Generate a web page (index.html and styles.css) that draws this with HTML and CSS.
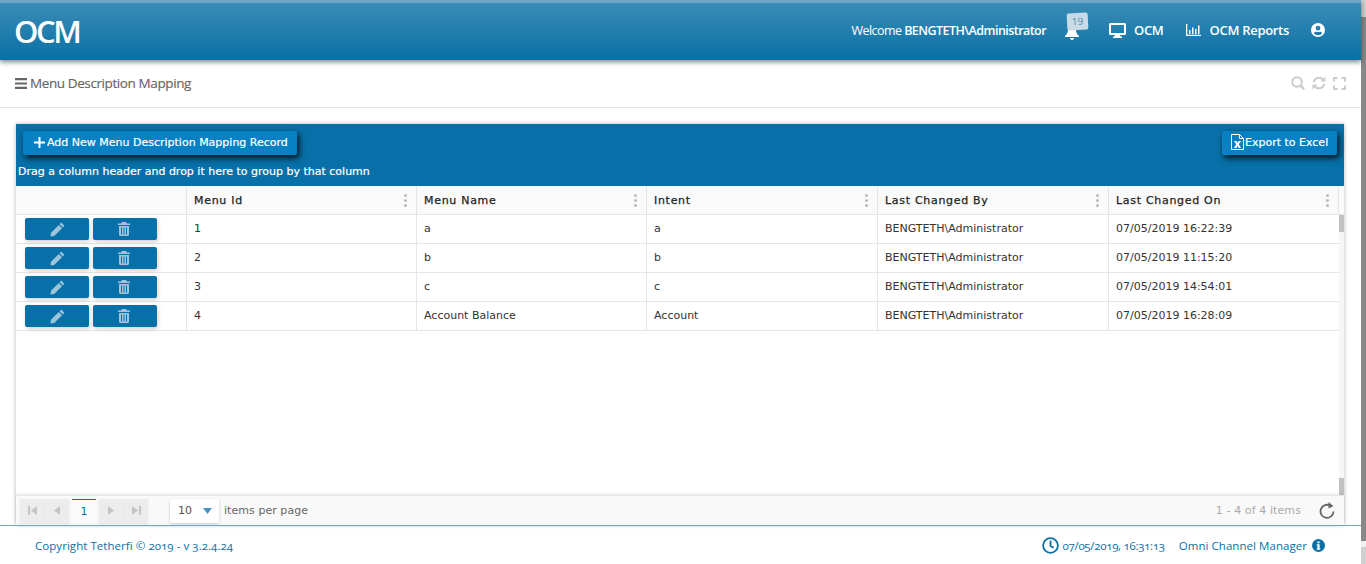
FILE: index.html
```html
<!DOCTYPE html>
<html lang="en">
<head>
<meta charset="utf-8">
<title>Menu Description Mapping</title>
<link rel="stylesheet" href="styles.css">
</head>
<body>
<div class="page">
  <div class="main">
    <header class="topbar">
      <div class="logo">OCM</div>
      <nav class="topnav">
        <span class="welcome">Welcome <b>BENGTETH\Administrator</b></span>
        <span class="bell">
          <svg width="14" height="16" viewBox="0 0 14 16"><path fill="#fff" d="M7 0c2.600 0 3.800 2 3.800 4.500 0 3.500.9 5.500 3.200 7.500v1H0v-1c2.300-2 3.200-4 3.200-7.500C3.200 2 4.400 0 7 0zM5 14h4c0 1-1 2-2 2s-2-1-2-2z"/></svg>
          <span class="badge">19</span>
        </span>
        <span class="navitem monitor">
          <svg width="17" height="15" viewBox="0 0 17 15"><path fill="#fff" fill-rule="evenodd" d="M1.500 0h14A1.500 1.500 0 0 1 17 1.500v9a1.500 1.500 0 0 1-1.500 1.500H11l.5 1.500H13V15H4v-1.500h1.500L6 12H1.500A1.500 1.500 0 0 1 0 10.500v-9A1.500 1.500 0 0 1 1.500 0zM2 2v8h13V2z"/></svg>
          OCM</span>
        <span class="navitem reports">
          <svg width="15" height="12" viewBox="0 0 15 12"><path fill="#fff" d="M0 0h1.300v10.700H15V12H0zM3 6h1.500v4H3zM6 3.500h1.500V10H6zM9 5h1.500v5H9zM12 1.500h1.500V10H12z"/></svg>
          OCM Reports</span>
        <svg class="user" width="14" height="14" viewBox="0 0 14 14"><path fill="#fff" fill-rule="evenodd" d="M7 0a7 7 0 1 1 0 14A7 7 0 0 1 7 0zm0 2.800a2.400 2.400 0 1 0 0 4.800 2.400 2.400 0 0 0 0-4.800zM7 12.200c1.700 0 3.200-.8 4.200-2-.4-1-1.300-1.500-2.400-1.500-.6.200-1.200.3-1.800.3s-1.200-.1-1.800-.3c-1.100 0-2 .5-2.400 1.500 1 1.200 2.500 2 4.200 2z"/></svg>
      </nav>
    </header>

    <div class="titlebar">
      <h1 class="pagetitle">
        <svg width="12" height="11" viewBox="0 0 12 11"><path fill="#666" d="M0 0h12v2.200H0zM0 4.400h12v2.200H0zM0 8.800h12V11H0z"/></svg>
        Menu Description Mapping</h1>
      <div class="tools">
        <svg width="14" height="14" viewBox="0 0 14 14"><path fill="none" stroke="#ccc" stroke-width="2" d="M6 1.200a4.800 4.800 0 1 0 0 9.600 4.800 4.800 0 0 0 0-9.600z"/><path stroke="#ccc" stroke-width="2.600" d="M9.500 9.500l3.600 3.600"/></svg>
        <svg width="14" height="14" viewBox="0 0 14 14"><path fill="none" stroke="#ccc" stroke-width="2" d="M1.800 6A5.300 5.300 0 0 1 11 3.500M12.200 8A5.300 5.300 0 0 1 3 10.500"/><path fill="#ccc" d="M13.500.5v5h-5zM.5 13.500v-5h5z"/></svg>
        <svg width="13" height="13" viewBox="0 0 13 13"><path fill="none" stroke="#ccc" stroke-width="2" d="M1 4.500V1h3.500M8.500 1H12v3.500M12 8.500V12H8.500M4.500 12H1V8.500"/></svg>
      </div>
    </div>

    <section class="gridwrap">
      <div class="grid">
        <div class="toolbar">
          <div class="toolbar-row">
            <button class="tbtn add" type="button"><svg width="11" height="11" viewBox="0 0 11 11"><path fill="#fff" d="M4.500 0h2v4.500H11v2H6.500V11h-2V6.500H0v-2h4.500z"/></svg>Add New Menu Description Mapping Record</button>
            <button class="tbtn export" type="button">
              <svg width="13" height="16" viewBox="0 0 13 16"><path fill="none" stroke="#fff" d="M.5.500h8l4 4v11H.5zM8.500.500v4h4"/><path fill="#fff" d="M3 7h2.400l1.100 2 1.100-2H10L7.800 10.300 10 14H7.600l-1.100-2.200L5.400 14H3l2.200-3.700z"/></svg>Export to Excel</button>
          </div>
          <div class="grouphint">Drag a column header and drop it here to group by that column</div>
        </div>

        <div class="gridhead">
          <div class="hcell"></div>
          <div class="hcell">Menu Id<span class="kebab"></span></div>
          <div class="hcell">Menu Name<span class="kebab"></span></div>
          <div class="hcell">Intent<span class="kebab"></span></div>
          <div class="hcell">Last Changed By<span class="kebab"></span></div>
          <div class="hcell">Last Changed On<span class="kebab"></span></div>
        </div>

        <div class="gridbody">
          <div class="rows">
            <div class="row">
              <div class="cell actions"><button class="rowbtn" type="button" aria-label="Edit"><svg class="i-edit" width="15" height="15" viewBox="0 0 15 15"><path d="M11.200.6l3.200 3.200-1.600 1.600-3.200-3.200zM8.800 3l3.200 3.200-7.800 7.800L.4 14.600 1 10.800z"/></svg></button><button class="rowbtn" type="button" aria-label="Delete"><svg class="i-del" width="12" height="14" viewBox="0 0 12 14"><path d="M4 0h4l1 1.500h3v1.500H0V1.500h3zM1 4h10v8.500A1.500 1.500 0 0 1 9.500 14h-7A1.500 1.500 0 0 1 1 12.500zM3 5.500v7h1v-7zM5.500 5.500v7h1v-7zM8 5.500v7h1v-7z" fill-rule="evenodd"/></svg></button></div>
              <div class="cell">1</div><div class="cell">a</div><div class="cell">a</div><div class="cell">BENGTETH\Administrator</div><div class="cell">07/05/2019 16:22:39</div>
            </div>
            <div class="row">
              <div class="cell actions"><button class="rowbtn" type="button" aria-label="Edit"><svg class="i-edit" width="15" height="15" viewBox="0 0 15 15"><path d="M11.200.6l3.200 3.200-1.600 1.600-3.200-3.200zM8.800 3l3.200 3.200-7.800 7.800L.4 14.600 1 10.800z"/></svg></button><button class="rowbtn" type="button" aria-label="Delete"><svg class="i-del" width="12" height="14" viewBox="0 0 12 14"><path d="M4 0h4l1 1.500h3v1.500H0V1.500h3zM1 4h10v8.500A1.500 1.500 0 0 1 9.500 14h-7A1.500 1.500 0 0 1 1 12.500zM3 5.500v7h1v-7zM5.500 5.500v7h1v-7zM8 5.500v7h1v-7z" fill-rule="evenodd"/></svg></button></div>
              <div class="cell">2</div><div class="cell">b</div><div class="cell">b</div><div class="cell">BENGTETH\Administrator</div><div class="cell">07/05/2019 11:15:20</div>
            </div>
            <div class="row">
              <div class="cell actions"><button class="rowbtn" type="button" aria-label="Edit"><svg class="i-edit" width="15" height="15" viewBox="0 0 15 15"><path d="M11.200.6l3.200 3.200-1.600 1.600-3.200-3.200zM8.800 3l3.200 3.200-7.800 7.800L.4 14.600 1 10.800z"/></svg></button><button class="rowbtn" type="button" aria-label="Delete"><svg class="i-del" width="12" height="14" viewBox="0 0 12 14"><path d="M4 0h4l1 1.500h3v1.500H0V1.500h3zM1 4h10v8.500A1.500 1.500 0 0 1 9.500 14h-7A1.500 1.500 0 0 1 1 12.500zM3 5.500v7h1v-7zM5.500 5.500v7h1v-7zM8 5.500v7h1v-7z" fill-rule="evenodd"/></svg></button></div>
              <div class="cell">3</div><div class="cell">c</div><div class="cell">c</div><div class="cell">BENGTETH\Administrator</div><div class="cell">07/05/2019 14:54:01</div>
            </div>
            <div class="row">
              <div class="cell actions"><button class="rowbtn" type="button" aria-label="Edit"><svg class="i-edit" width="15" height="15" viewBox="0 0 15 15"><path d="M11.200.6l3.200 3.200-1.600 1.600-3.200-3.200zM8.800 3l3.200 3.200-7.800 7.800L.4 14.600 1 10.800z"/></svg></button><button class="rowbtn" type="button" aria-label="Delete"><svg class="i-del" width="12" height="14" viewBox="0 0 12 14"><path d="M4 0h4l1 1.500h3v1.500H0V1.500h3zM1 4h10v8.500A1.500 1.500 0 0 1 9.500 14h-7A1.500 1.500 0 0 1 1 12.500zM3 5.500v7h1v-7zM5.500 5.500v7h1v-7zM8 5.500v7h1v-7z" fill-rule="evenodd"/></svg></button></div>
              <div class="cell">4</div><div class="cell">Account Balance</div><div class="cell">Account</div><div class="cell">BENGTETH\Administrator</div><div class="cell">07/05/2019 16:28:09</div>
            </div>
          </div>
          <div class="vscroll"><div class="vthumb top"></div><div class="vthumb bottom"></div></div>
        </div>

        <div class="pager">
          <div class="pbtns">
            <span class="pbtn"><svg width="9" height="9" viewBox="0 0 9 9"><path d="M0 0h2v9H0zM9 0v9L3 4.500z"/></svg></span>
            <span class="pbtn"><svg width="6" height="9" viewBox="0 0 6 9"><path d="M6 0v9L0 4.500z"/></svg></span>
            <span class="pcur">1</span>
            <span class="pbtn"><svg width="6" height="9" viewBox="0 0 6 9"><path d="M0 0v9l6-4.500z"/></svg></span>
            <span class="pbtn"><svg width="9" height="9" viewBox="0 0 9 9"><path d="M7 0h2v9H7zM0 0v9l6-4.500z"/></svg></span>
          </div>
          <div class="psize">10<svg width="9" height="6" viewBox="0 0 9 6"><path d="M0 0h9L4.500 6z"/></svg></div>
          <span class="pertext">items per page</span>
          <span class="pinfo">1 - 4 of 4 items</span>
          <svg class="prefresh" width="16" height="17" viewBox="0 0 16 17"><path fill="none" stroke="#666" stroke-width="1.800" d="M11.500 3.800A6.500 6.500 0 1 0 14.500 9.500"/><path fill="#666" d="M9.500 0v6.500l5-2.200z"/></svg>
        </div>
      </div>
    </section>

    <footer class="footer">
      <span class="copy">Copyright Tetherfi © 2019 - v 3.2.4.24</span>
      <span class="fright">
        <svg width="17" height="17" viewBox="0 0 17 17"><circle cx="8.500" cy="8.500" r="7.400" fill="none" stroke="#0a70a6" stroke-width="1.800"/><path fill="none" stroke="#0a70a6" stroke-width="1.800" d="M8.500 3.500v5.500l3.200 1.800"/></svg>
        <span class="clock">07/05/2019, 16:31:13</span>
        <span class="appname">Omni Channel Manager</span>
        <svg width="13" height="13" viewBox="0 0 13 13"><path fill="#0a70a6" fill-rule="evenodd" d="M6.500 0a6.500 6.500 0 1 1 0 13 6.500 6.500 0 0 1 0-13zM5.400 2.400v1.900h2.200V2.400zM4.700 5.300v1.200h.7v3H4.700v1.200h3.600V9.500h-.7V5.300z"/></svg>
      </span>
    </footer>
  </div>
  <div class="pagescroll"><div class="pagecap"></div><div class="pagethumb"></div><div class="pagegap"></div><div class="pagecap"></div></div>
</div>
</body>
</html>
```
FILE: styles.css
```css
* { box-sizing: border-box; }
html, body { margin: 0; height: 100%; overflow: hidden; }
body { background: #fff; font-family: "Open Sans", "Liberation Sans", sans-serif; }

.page { display: flex; height: 564px; }
.main { flex: 1; min-width: 0; display: flex; flex-direction: column; }

.topbar {
  height: 60px; flex: none; display: flex; align-items: center; justify-content: space-between;
  padding: 0 36px 0 14px; border-top: 3px solid #6ea8c8;
  background: linear-gradient(#3a8cb5, #0a70a6);
  box-shadow: 0 2px 5px rgba(0,0,0,.5); color: #fff; position: relative; z-index: 2;
}
.logo { font-size: 31px; font-weight: 600; letter-spacing: -2.400px; line-height: 1; }
.topnav { display: flex; align-items: center; font-size: 13px; font-weight: 600; letter-spacing: -.3px; margin-top: -3px; }
.welcome { font-size: 12.500px; font-weight: 400; letter-spacing: -.55px; }
.welcome b { font-weight: 600; }
.bell { position: relative; margin-left: 19px; width: 14px; height: 16px; display: flex; margin-top: 4px; }
.badge {
  position: absolute; left: 2px; top: -11px; width: 21px; height: 17px; background: #c9dbe6; color: #5f8fae;
  font-size: 10px; font-weight: 400; letter-spacing: 0; text-align: center; line-height: 17px; border-radius: 2px; transform: rotate(-3deg);
}
.navitem { display: flex; align-items: center; }
.monitor { margin-left: 30px; gap: 8px; }
.reports { margin-left: 22px; gap: 9px; }
.user { margin-left: 22px; }

.titlebar {
  height: 48px; flex: none; display: flex; align-items: center; justify-content: space-between;
  padding: 0 15px 1px 15px; border-bottom: 1px solid #e6e6e6;
}
.pagetitle { margin: 0; font-size: 13.500px; font-weight: 400; color: #666; display: flex; align-items: center; gap: 3px; letter-spacing: -.4px; -webkit-text-stroke: .15px #666; }
.tools { display: flex; gap: 7px; align-items: center; }

.gridwrap { flex: 1; min-height: 0; padding: 16px 17px 0 16px; }
.grid { height: 100%; display: flex; flex-direction: column; box-shadow: 0 0 4px rgba(0,0,0,.3); background: #fff; }

.toolbar { height: 62px; flex: none; background: #0870a8; color: #fff; padding: 7px 7px 0 2px; }
.toolbar-row { display: flex; justify-content: space-between; padding: 0 0 0 5px; }
.tbtn {
  height: 24px; border: 0; border-radius: 2px; background: #0880c4; color: #fff; padding: 0 0 2px 11px;
  font: 400 11px "DejaVu Sans", sans-serif; display: flex; align-items: center; gap: 2px; white-space: nowrap;
  box-shadow: 2px 3px 6px rgba(0,0,0,.85); line-height: 1; -webkit-text-stroke: .2px #fff;
}
.tbtn.add { width: 274px; }
.tbtn.export { width: 115px; padding-left: 9px; gap: 1px; }
.grouphint { font: 400 11px "DejaVu Sans", sans-serif; margin-top: 10px; -webkit-text-stroke: .2px #fff; }

.gridhead, .row { display: grid; grid-template-columns: 171px 230px 230px 231px 231px 1fr; }
.gridhead { height: 29px; flex: none; background: #fafafa; border-bottom: 1px solid #e6e6e6; padding-right: 5px; font: 400 11px "DejaVu Sans", sans-serif; color: #222; }
.hcell { position: relative; display: flex; align-items: center; padding-left: 7px; border-right: 1px solid #e6e6e6; -webkit-text-stroke: .25px #222; letter-spacing: .7px; }
.kebab { position: absolute; right: 9px; top: 8px; width: 3px; height: 3px; border-radius: 50%; background: #bbb; box-shadow: 0 5px 0 #bbb, 0 10px 0 #bbb; }

.gridbody { flex: 1; min-height: 0; display: flex; font: 400 11px "DejaVu Sans", sans-serif; color: #333; }
.rows { flex: 1; min-width: 0; }
.row { height: 29px; border-bottom: 1px solid #e6e6e6; }
.cell { display: flex; align-items: center; padding: 0 0 2px 7px; border-right: 1px solid #e6e6e6; }
.cell:last-child { border-right: 0; }
.actions { padding: 3px 0 0 9px; gap: 4px; align-items: flex-start; }
.rowbtn { width: 64px; height: 22px; padding: 0; border: 0; border-radius: 2px; background: #0870a8; display: flex; align-items: center; justify-content: center; box-shadow: 1px 2px 4px rgba(0,0,0,.18); }
.i-edit, .i-del { fill: #9cc4da; }
.i-del { margin-right: 2px; }

.vscroll { width: 5px; flex: none; background: #f6f6f6; display: flex; flex-direction: column; justify-content: space-between; }
.vthumb { background: #c1c1c1; }
.vthumb.top { height: 17px; }
.vthumb.bottom { height: 17px; }

.pager { height: 30px; flex: none; display: flex; align-items: center; background: #f9f9f9; border-top: 1px solid #e6e6e6; padding: 0 9px 0 4px; font: 400 11px "DejaVu Sans", sans-serif; color: #666; box-shadow: 0 -1px 3px rgba(0,0,0,.1); }
.pbtns { display: flex; gap: 1px; align-items: stretch; height: 24px; }
.pbtn { width: 24px; height: 24px; background: #ececec; display: flex; align-items: center; justify-content: center; fill: #c4c4c4; box-shadow: 0 1px 2px rgba(0,0,0,.1); }
.pcur { width: 24px; margin: 0 2px; background: #fbfbfb; border-top: 1px solid #0a70a6; color: #0a70a6; display: flex; align-items: center; justify-content: center; }
.psize { margin-left: 22px; width: 49px; height: 24px; background: #fff; border-radius: 2px; box-shadow: 0 1px 3px rgba(0,0,0,.2); display: flex; align-items: center; justify-content: space-between; padding: 0 7px 0 8px; color: #555; fill: #4a93bd; }
.pertext { margin-left: 5px; letter-spacing: .05px; }
.pinfo { margin-left: auto; color: #aaa; margin-right: 18px; letter-spacing: .1px; }

.footer { height: 39px; flex: none; display: flex; align-items: center; justify-content: space-between; border-top: 1px solid #6ea8c8; padding: 0 36px 0 35px; font-size: 11.500px; color: #0a70a6; font-variant-numeric: oldstyle-nums; position: relative; }
.copy { letter-spacing: .05px; }
.fright { display: flex; align-items: center; }
.clock { margin-left: 4px; letter-spacing: -.3px; }
.appname { margin-left: 14px; margin-right: 5px; letter-spacing: .05px; }

.pagescroll { width: 5px; flex: none; background: #f1f1f1; display: flex; flex-direction: column; }
.pagecap { height: 17px; flex: none; background: #cfcfcf; }
.pagethumb { flex: 1; background: #888; }
.pagegap { height: 6px; flex: none; background: #f1f1f1; }
```
